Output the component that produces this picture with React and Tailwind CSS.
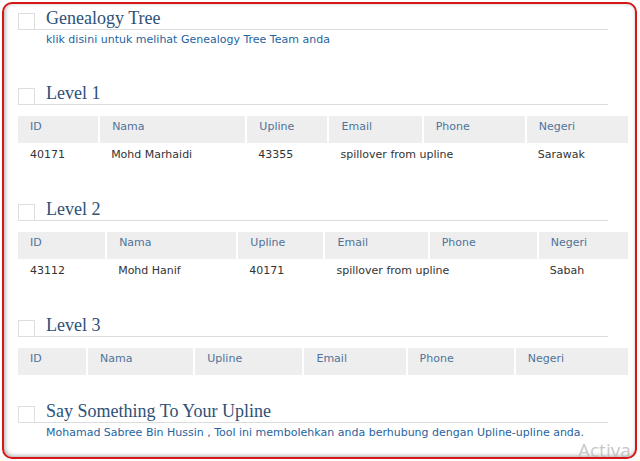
// Halaman tim: Genealogy Tree, tabel Level 1-3 dan pesan ke upline.
const LEVELS = [
  {
    title: 'Level 1',
    widths: ['w-[81px]', 'w-[147px]', 'w-[82px]', 'w-[94px]', 'w-[103px]', 'w-[102px]'],
    rows: [['40171', 'Mohd Marhaidi', '43355', 'spillover from upline', '', 'Sarawak']],
  },
  {
    title: 'Level 2',
    widths: ['w-[88px]', 'w-[131px]', 'w-[87px]', 'w-[104px]', 'w-[109px]', 'w-[90px]'],
    rows: [['43112', 'Mohd Hanif', '40171', 'spillover from upline', '', 'Sabah']],
  },
  {
    title: 'Level 3',
    widths: ['w-[69px]', 'w-[107px]', 'w-[109px]', 'w-[103px]', 'w-[108px]', 'w-[113px]'],
    rows: [],
  },
];

const COLS = ['ID', 'Nama', 'Upline', 'Email', 'Phone', 'Negeri'];

function Heading({ children }) {
  return (
    <div className="mr-[20px] flex items-end">
      <span className="h-[17px] w-[17px] shrink-0 border border-[#dedede] bg-white" />
      <h2 className="flex h-[19px] flex-1 items-start border-b border-[#dcdcdc] pl-[11px] font-['Liberation_Serif',serif] text-[18px] leading-[20px] text-[#2d5177]">
        <span className="-mt-[3px]">{children}</span>
      </h2>
    </div>
  );
}

function Note({ children }) {
  return (
    <p className="mt-[4px] pl-[28px] font-['DejaVu_Sans',sans-serif] text-[11px] leading-[12px] text-[#2563a0]">
      {children}
    </p>
  );
}

function Table({ widths, rows }) {
  return (
    <table className="mt-[11px] w-full table-fixed border-collapse font-['DejaVu_Sans',sans-serif] text-[11px]">
      <thead>
        <tr className="h-[27px] bg-[#eeeeee]">
          {COLS.map((c, i) => (
            <th
              key={c}
              className={`${widths[i]} border-r-2 border-white pb-[4px] pl-[12px] text-left font-normal text-[#4f7399] last:border-r-0`}
            >
              {c}
            </th>
          ))}
        </tr>
      </thead>
      <tbody>
        {rows.map((r) => (
          <tr key={r[0]} className="h-[24px]">
            {r.map((v, i) => (
              <td key={i} className="overflow-visible whitespace-nowrap pl-[12px] text-[#333333]">
                {v}
              </td>
            ))}
          </tr>
        ))}
      </tbody>
    </table>
  );
}

export default function App() {
  return (
    <div className="relative h-[461px] w-[640px] overflow-hidden bg-white">
      <div className="m-[2px] h-[457px] w-[635px] rounded-[10px] border-2 border-[#d51717] pt-[7px] pl-[14px] pr-[7px] shadow-[inset_1px_-1px_4px_rgba(0,0,0,0.35)]">
        <section>
          <Heading>Genealogy Tree</Heading>
          <Note>klik disini untuk melihat Genealogy Tree Team anda</Note>
        </section>

        {LEVELS.map((lv, i) => (
          <section key={lv.title} className={i === 0 ? 'mt-[40px]' : 'mt-[35px]'}>
            <Heading>{lv.title}</Heading>
            <Table widths={lv.widths} rows={lv.rows} />
          </section>
        ))}

        <section className="mt-[29px]">
          <Heading>Say Something To Your Upline</Heading>
          <Note>Mohamad Sabree Bin Hussin , Tool ini membolehkan anda berhubung dengan Upline-upline anda.</Note>
        </section>
      </div>

      {/* watermark Windows di pojok kanan bawah */}
      <span className="absolute left-[578px] top-[439px] whitespace-nowrap font-['Open_Sans',sans-serif] text-[19px] leading-[22px] text-[#b8b8b8]/80">
        Activa
      </span>
    </div>
  );
}
